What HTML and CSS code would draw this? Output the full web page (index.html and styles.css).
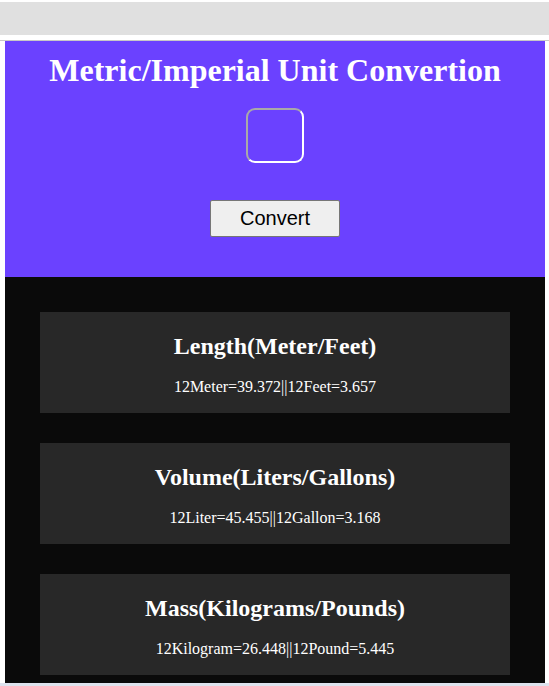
FILE: index.html
```html
<!DOCTYPE html>
<html>
<head>
<meta charset="utf-8">
<link rel="stylesheet" href="styles.css">
</head>
<body>
<div class="frame">
  <div class="topbar"></div>
  <div class="divider"></div>
  <main class="app">
    <section class="hero">
      <h1 class="title">Metric/Imperial Unit Convertion</h1>
      <input class="amount" type="text">
      <button class="convert">Convert</button>
    </section>
    <section class="results">
      <div class="card">
        <h2 class="card-title">Length(Meter/Feet)</h2>
        <p class="card-text">12Meter=39.372||12Feet=3.657</p>
      </div>
      <div class="card">
        <h2 class="card-title">Volume(Liters/Gallons)</h2>
        <p class="card-text">12Liter=45.455||12Gallon=3.168</p>
      </div>
      <div class="card">
        <h2 class="card-title">Mass(Kilograms/Pounds)</h2>
        <p class="card-text">12Kilogram=26.448||12Pound=5.445</p>
      </div>
    </section>
  </main>
  <div class="bottomline"></div>
</div>
</body>
</html>
```
FILE: styles.css
```css
html, body {
  margin: 0;
  padding: 0;
  background: #ffffff;
  overflow: hidden;
}
.frame {
  height: 686px;
  display: flex;
  flex-direction: column;
}
.topbar {
  margin-top: 2px;
  height: 33px;
  background: #e0e0e0;
  flex: none;
}
.divider {
  margin-top: 5px;
  height: 1px;
  background: #c8c8c8;
  flex: none;
}
.app {
  flex: 1;
  margin: 0 4px 0 5px;
  overflow: hidden;
  font-family: "Liberation Serif", "Times New Roman", serif;
  background: #0a0a0a;
}
.hero {
  background: #6b41ff;
  height: 236px;
  box-sizing: border-box;
  padding-top: 11px;
  display: flex;
  flex-direction: column;
  align-items: center;
}
.title {
  margin: 0;
  font-size: 32px;
  line-height: 37px;
  font-weight: bold;
  color: #ffffff;
}
.amount {
  margin-top: 19px;
  width: 58px;
  height: 55px;
  box-sizing: border-box;
  border: 2px solid #ffffff;
  border-top-color: #a9a9a9;
  border-left-color: #a9a9a9;
  border-radius: 9px;
  background: transparent;
  padding: 0;
}
.convert {
  margin-top: 37px;
  width: 130px;
  height: 37px;
  box-sizing: border-box;
  background: #efefef;
  border: 1px solid #767676;
  border-radius: 2px;
  font-family: "Liberation Sans", Arial, sans-serif;
  font-size: 20px;
  color: #000000;
  padding: 0;
}
.results {
  padding: 35px 35px 0;
  display: flex;
  flex-direction: column;
  gap: 30px;
}
.card {
  background: #282828;
  height: 101px;
  box-sizing: border-box;
  padding-top: 20px;
  text-align: center;
  color: #ffffff;
}
.card-title {
  margin: 0;
  font-size: 24px;
  line-height: 28px;
  font-weight: bold;
}
.card-text {
  margin: 18px 0 0;
  font-size: 16px;
  line-height: 18px;
}
.bottomline {
  flex: none;
  height: 3px;
  background: #dde3ee;
}
```
